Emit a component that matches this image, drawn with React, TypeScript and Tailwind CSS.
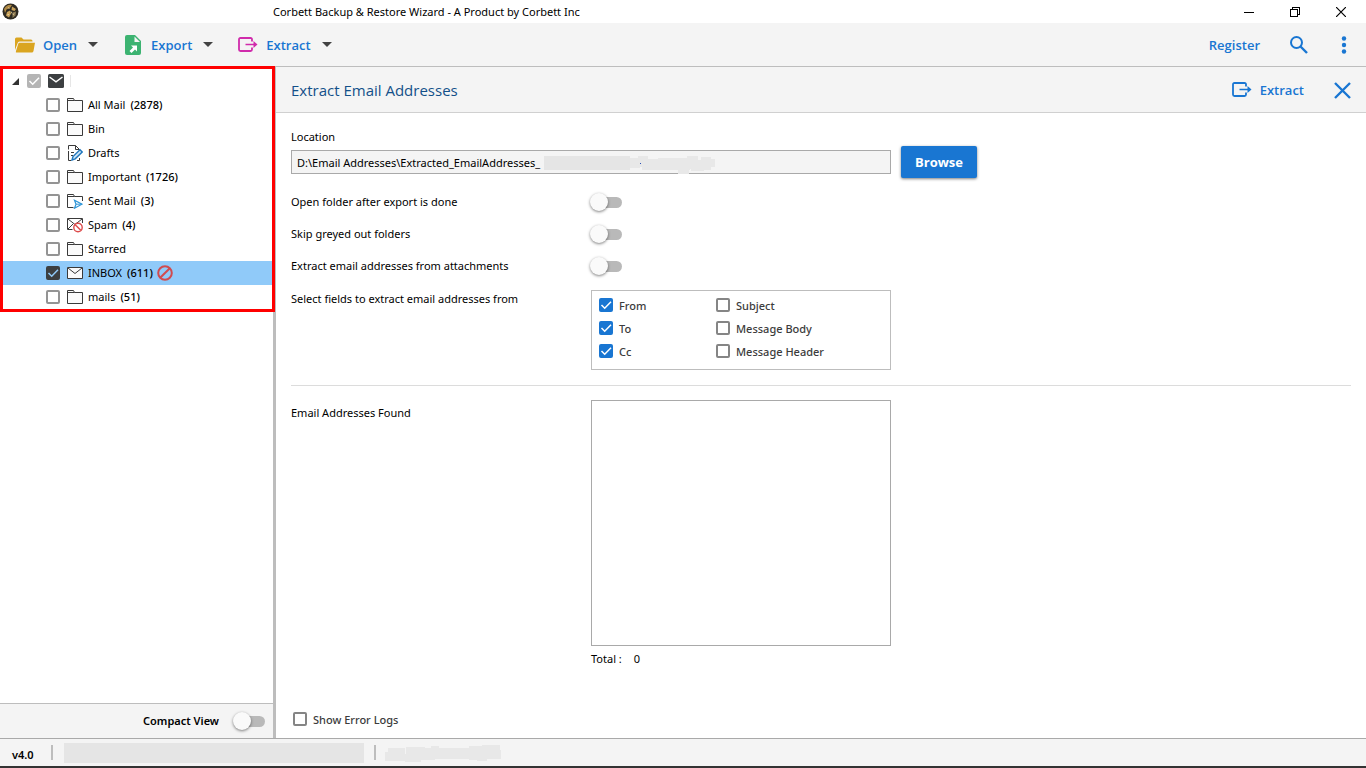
import React, { useState } from 'react';
import clsx from 'clsx';

type IconName = 'folder' | 'drafts' | 'sent' | 'spam' | 'inbox';

const folders: { name: string; count?: number; icon: IconName; selected?: boolean }[] = [
  { name: 'All Mail', count: 2878, icon: 'folder' },
  { name: 'Bin', icon: 'folder' },
  { name: 'Drafts', icon: 'drafts' },
  { name: 'Important', count: 1726, icon: 'folder' },
  { name: 'Sent Mail', count: 3, icon: 'sent' },
  { name: 'Spam', count: 4, icon: 'spam' },
  { name: 'Starred', icon: 'folder' },
  { name: 'INBOX', count: 611, icon: 'inbox', selected: true },
  { name: 'mails', count: 51, icon: 'folder' },
];

const fields = [
  { name: 'From', on: true },
  { name: 'Subject', on: false },
  { name: 'To', on: true },
  { name: 'Message Body', on: false },
  { name: 'Cc', on: true },
  { name: 'Message Header', on: false },
];

export default function App() {
  return (
    <div className="flex min-h-screen flex-col bg-white font-['Noto_Sans','Open_Sans',sans-serif] text-[11px] leading-4 text-black">
      <TitleBar />
      <Toolbar />
      <div className="flex flex-1">
        <Sidebar />
        <ExtractPanel />
      </div>
      <StatusBar />
    </div>
  );
}

function TitleBar() {
  return (
    <header className="flex h-[23px] items-center pr-0.5">
      <div className="w-[273px] shrink-0 pl-0.5">
        <LogoIcon />
      </div>
      <h1 className="flex-1">Corbett Backup &amp; Restore Wizard - A Product by Corbett Inc</h1>
      <button aria-label="Minimize" className="flex h-5 w-[46px] items-center justify-center">
        <svg width="10" height="10" shapeRendering="crispEdges"><path d="M0 5.5h10" stroke="#000" /></svg>
      </button>
      <button aria-label="Restore" className="flex h-5 w-[46px] items-center justify-center">
        <svg width="10" height="10" fill="none" stroke="#000" shapeRendering="crispEdges">
          <path d="M.5 2.5h7v7h-7zM2.5 2V.5h7v7H8" />
        </svg>
      </button>
      <button aria-label="Close" className="flex h-5 w-[46px] items-center justify-center">
        <svg width="10" height="10" stroke="#000" strokeWidth="1.2"><path d="M0 0l10 10M10 0L0 10" /></svg>
      </button>
    </header>
  );
}

function Toolbar() {
  return (
    <nav className="flex h-11 items-center justify-between border-b border-[#bdbdbd] bg-[#f4f4f4] pr-[19px] pl-[15px] font-['Open_Sans',sans-serif] text-[13px] font-semibold text-[#1976d2]">
      <div className="flex items-center gap-[25px]">
        <MenuButton label="Open">
          <svg width="20" height="16" viewBox="0 0 20 16" fill="#daa520">
            <path d="M0 13V2q0-1.500 1.500-1.500H6.500L8.500 2.500H16q1.500 0 1.500 1.500V4.500H4.500Q3 4.500 2.700 6z" />
            <path d="M4.600 5.700H20L18.500 14q-.3 1.500-1.800 1.500H1.200Q.6 15.500 1 14L3.200 7q.3-1.300 1.400-1.300z" />
          </svg>
        </MenuButton>
        <MenuButton label="Export">
          <svg width="20" height="20" viewBox="-2 0 20 20">
            <path d="M2 0h8l6 6v12q0 2-2 2H2q-2 0-2-2V2q0-2 2-2z" fill="#3cb371" />
            <path d="M9.500 1.500V7H15z" fill="#f4f4f4" />
            <path d="M6 10.500h6v6l-2-2-3.500 3.500L4.500 16 8 12.500z" fill="#fff" />
          </svg>
        </MenuButton>
        <MenuButton label="Extract">
          <ExtractIcon className="text-[#d02bab]" />
        </MenuButton>
      </div>
      <div className="flex items-center">
        <a href="#register" className="mr-[30px]">Register</a>
        <button aria-label="Search" className="mr-[33px]">
          <svg width="18" height="18" viewBox="0 0 18 18" fill="none" stroke="currentColor" strokeWidth="2">
            <circle cx="6.500" cy="6.500" r="5.500" />
            <path d="M10.500 10.500l6.500 6.500" strokeWidth="2.400" />
          </svg>
        </button>
        <button aria-label="More">
          <svg width="6" height="18" viewBox="0 0 6 18" fill="currentColor">
            <circle cx="3" cy="2.500" r="2.200" />
            <circle cx="3" cy="9" r="2.200" />
            <circle cx="3" cy="15.500" r="2.200" />
          </svg>
        </button>
      </div>
    </nav>
  );
}

function MenuButton({ label, children }: { label: string; children: React.ReactNode }) {
  return (
    <button className="flex items-center gap-2">
      {children}
      <span>{label}</span>
      <svg width="10" height="5" className="ml-[3px]" fill="#424242"><path d="M0 0h10L5 5z" /></svg>
    </button>
  );
}

function Sidebar() {
  return (
    <aside className="flex w-[276px] shrink-0 flex-col border-r-3 border-[#bdbdbd]">
      <div className="relative pt-0.5 pb-[3px]">
        <div className="flex h-6 items-center pl-3">
          <svg width="7" height="7" className="mr-[8px]" fill="#333"><path d="M7 0v7H0z" /></svg>
          <Checkbox tone="disabled" checked label="Mailbox" />
          <svg width="16" height="14" viewBox="0 0 16 14" className="ml-[7px]">
            <rect width="16" height="14" rx="1.500" fill="#3c3f41" />
            <path d="M1.500 3L8 7.800 14.500 3" fill="none" stroke="#fff" strokeWidth="1.500" />
          </svg>
          <span className="ml-1.5 h-3 w-px bg-[#e6e6e6]" />
        </div>
        <ul>
          {folders.map((f) => (
            <li key={f.name} className={clsx('mr-px ml-[3px]', f.selected && 'bg-[#90caf9]')}>
              <label className="flex h-6 items-center pl-[43px]">
                <Checkbox tone="dark" checked={f.selected} />
                <span className="mr-[5px] ml-[7px]"><FolderIcon name={f.icon} /></span>
                <span>{f.name}</span>
                {f.count !== undefined && <span className="ml-[5px] font-medium">({f.count})</span>}
                {f.selected && (
                  <svg width="16" height="16" viewBox="0 0 16 16" className="ml-1" fill="none" stroke="#d04b4f" strokeWidth="2">
                    <circle cx="8" cy="8" r="6.800" />
                    <path d="M3.200 12.800l9.600-9.600" />
                  </svg>
                )}
              </label>
            </li>
          ))}
        </ul>
        {/* highlight frame around the folder tree, runs over the toolbar line and the splitter */}
        <div className="pointer-events-none absolute -top-px -right-0.5 bottom-0 left-0 border-3 border-[#f00]" />
      </div>
      <label className="mt-auto flex h-[35px] items-center justify-end gap-3.5 border-t border-[#bdbdbd] bg-[#f4f4f4] pr-2 font-semibold">
        Compact View
        <Toggle />
      </label>
    </aside>
  );
}

function ExtractPanel() {
  return (
    <main className="flex min-w-0 flex-1 flex-col">
      <div className="flex h-[46px] items-center border-b border-[#d0d0d0] bg-[#f4f4f4] px-[15px] pt-px font-['Open_Sans',sans-serif]">
        <h2 className="flex-1 text-[15px] leading-5 text-[#135089]">Extract Email Addresses</h2>
        <button className="flex items-center gap-2 text-[13px] font-semibold text-[#1976d2]">
          <ExtractIcon />
          Extract
        </button>
        <button aria-label="Close panel" className="ml-[30px] text-[#1976d2]">
          <svg width="17" height="17" stroke="currentColor" strokeWidth="2.400"><path d="M1 1l15 15M16 1L1 16" /></svg>
        </button>
      </div>

      <div className="flex flex-1 flex-col px-[15px] pt-4 pb-[10px]">
        <label htmlFor="location">Location</label>
        <div className="mt-px flex items-center gap-2.5">
          <div className="relative w-[600px]">
            <input
              id="location"
              readOnly
              value="D:\Email Addresses\Extracted_EmailAddresses_"
              className="block h-6 w-full border border-[#a9a9a9] bg-[#f4f4f4] px-[5px] outline-none"
            />
            <svg width="172" height="20" className="absolute top-[5px] left-[253px]" fill="#e8e8e8" shapeRendering="crispEdges">
              <path d="M0 1h86v14H0z" fill="#e5e5e5" />
              <path d="M86 3h10v10H86zM94 1h10v11H94zM98 4h18v11H98zM114 3h32v12h-32zM134 14h11v5h-11zM143 1h11v13h-11zM147 5h13v11h-13zM157 2h10v13h-10zM165 4h6v8h-6z" />
              <path d="M96 8h1v1h-1z" fill="#2a4fb5" />
            </svg>
          </div>
          <button className="h-8 w-[76px] rounded-xs bg-[#1976d2] font-['Open_Sans',sans-serif] text-[13px] font-bold text-white shadow-[0_1px_3px_rgba(0,0,0,0.5)]">
            Browse
          </button>
        </div>

        <div className="my-2">
          <ToggleRow label="Open folder after export is done" />
          <ToggleRow label="Skip greyed out folders" />
          <ToggleRow label="Extract email addresses from attachments" />
        </div>

        <fieldset className="flex">
          <legend className="float-left w-[300px] leading-[18px]">Select fields to extract email addresses from</legend>
          <div className="grid h-20 w-[300px] grid-cols-[117px_1fr] content-start border border-[#bdbdbd] pt-[3px] pl-[7px]">
            {fields.map((f) => (
              <label key={f.name} className="flex h-[23px] items-center gap-1.5 font-medium text-[#3c3c3c]">
                <Checkbox tone="blue" checked={f.on} />
                {f.name}
              </label>
            ))}
          </div>
        </fieldset>

        <hr className="mt-[15px] mb-[14px] border-[#dcdcdc]" />

        <div className="flex flex-1">
          <label htmlFor="found" className="w-[300px] pt-1 leading-[18px]">Email Addresses Found</label>
          <div className="flex w-[300px] flex-col">
            <textarea id="found" readOnly className="min-h-40 w-full flex-1 resize-none border border-[#a9a9a9] outline-none" />
            <p className="mt-[5px] flex gap-3">
              <span>Total :</span>
              <span>0</span>
            </p>
          </div>
        </div>

        <label className="mt-[45px] flex items-center gap-1.5 self-start pl-0.5 font-medium text-[#3c3c3c]">
          <Checkbox tone="blue" />
          Show Error Logs
        </label>
      </div>
    </main>
  );
}

function StatusBar() {
  return (
    <footer className="flex h-[30px] items-center border-t border-b-2 border-t-[#a9a9a9] border-b-[#333] bg-[#f4f4f4] pl-3">
      <span className="w-[39px] pt-1 font-semibold">v4.0</span>
      <span className="h-[15px] w-0.5 bg-[#bdbdbd]" />
      <span className="ml-[11px] h-5 w-[300px] bg-[#e5e5e5]" />
      <span className="ml-2.5 h-[15px] w-0.5 bg-[#bdbdbd]" />
      <svg width="118" height="18" className="ml-[9px]" fill="#e8e8e8" shapeRendering="crispEdges">
        <path d="M0 8h20v9H0zM3 4h17v10H3zM20 10h16v8H20zM21 3h19v13H21zM36 4h14v12H36zM46 2h8v12h-8zM50 4h38v11H50zM84 2h16v14H84zM92 13h10v4H92zM97 1h18v14H97zM104 6h12v9h-12z" />
      </svg>
    </footer>
  );
}

function ToggleRow({ label }: { label: string }) {
  return (
    <label className="flex h-8 items-center">
      <span className="w-[299px]">{label}</span>
      <Toggle />
    </label>
  );
}

function Toggle() {
  const [on, setOn] = useState(false);

  return (
    <span className="relative flex h-5 w-8 items-center">
      <input
        type="checkbox"
        role="switch"
        checked={on}
        onChange={() => setOn(!on)}
        className="ml-2 h-[11px] w-6 appearance-none rounded-full bg-[#b9b9b9] checked:bg-[#90caf9]"
      />
      <span
        className={clsx(
          'pointer-events-none absolute size-[18px] rounded-full bg-[#fafafa] shadow-[0_1px_3px_rgba(0,0,0,0.5)]',
          on ? 'right-0' : 'left-0'
        )}
      />
    </span>
  );
}

function Checkbox({ tone, checked = false, label }: { tone: 'dark' | 'blue' | 'disabled'; checked?: boolean; label?: string }) {
  const [on, setOn] = useState(checked);

  return (
    <span className={clsx('relative flex shrink-0', tone === 'blue' && 'mb-0.5')}>
      <input
        type="checkbox"
        aria-label={label}
        checked={on}
        disabled={tone === 'disabled'}
        onChange={() => setOn(!on)}
        className={clsx(
          'size-[14px] appearance-none rounded-xs border-2',
          tone === 'dark' && 'border-[#949494] bg-white checked:border-[#3c3f41] checked:bg-[#3c3f41]',
          tone === 'blue' && 'border-[#858585] bg-white checked:border-[#1976d2] checked:bg-[#1976d2]',
          tone === 'disabled' && 'border-[#b5b5b5] bg-[#b5b5b5]'
        )}
      />
      {on && (
        <svg
          width="14"
          height="14"
          className={clsx('pointer-events-none absolute top-0 left-0', tone === 'dark' ? 'text-[#90caf9]' : 'text-white')}
          fill="none"
          stroke="currentColor"
          strokeWidth="1.500"
        >
          <path d="M2.500 7l3.200 3.200L12 3.800" />
        </svg>
      )}
    </span>
  );
}

function FolderIcon({ name }: { name: IconName }) {
  return (
    <svg width="16" height="16" viewBox="0 0 16 16" fill="none" stroke="#3a3a3a">
      {name === 'folder' && <path d="M.5 14.500V1.500H6.500L7.500 3.500H15.500V14.500zM.5 3.500H7.500" fill="#fafafa" />}
      {name === 'sent' && (
        <>
          <path d="M6.500 14.500H.5V1.500H6.500L7.500 3.500H15.500V8M.5 3.500H7.500" />
          <path d="M7.500 7.200L15 11.200 7.500 15.200 9 11.200z" fill="#fff" stroke="#2f96d8" strokeWidth="1.200" />
          <path d="M9 11.200h6" stroke="#2f96d8" />
        </>
      )}
      {name === 'drafts' && (
        <>
          <path d="M1.500 4.500V.5H8.500L12.500 4.500V6M1.500 6v9.500H4M8.500 .5V4.500H12.500M12.500 13v2.500H10M4 7.500h3M4 10.500h2" />
          <path d="M5 15l1-3.500L13 4.800 15.200 7 8.200 13.800z" fill="#cfe6f7" stroke="#2077bd" strokeWidth="1.400" />
        </>
      )}
      {name === 'inbox' && (
        <>
          <path d="M.5 2.500h15v11H.5z" fill="#fafafa" />
          <path d="M1 3L8 8.500 15 3" />
        </>
      )}
      {name === 'spam' && (
        <>
          <path d="M5.500 12.500H.5V1.500H15.500V6M1 2L8 7.500 15 2M1 12l5-5" />
          <circle cx="11" cy="10.500" r="4.200" fill="#fff" stroke="#dd4b4b" strokeWidth="1.400" />
          <path d="M8.200 7.700l5.600 5.600" stroke="#dd4b4b" strokeWidth="1.400" />
        </>
      )}
    </svg>
  );
}

function ExtractIcon({ className }: { className?: string }) {
  return (
    <svg width="20" height="16" viewBox="0 0 20 16" fill="none" stroke="currentColor" strokeWidth="1.800" className={className}>
      <path d="M14 4.500V2.500Q14 1 12.500 1H2.500Q1 1 1 2.500V12.500Q1 14 2.500 14H12.500Q14 14 14 12.500V10.500" />
      <path d="M7.500 7.500H18" strokeWidth="1.500" />
      <path d="M15.500 4L19.500 7.500 15.500 11z" fill="currentColor" stroke="none" />
    </svg>
  );
}

function LogoIcon() {
  return (
    <svg width="17" height="17" viewBox="0 0 17 17">
      <circle cx="8.500" cy="8.500" r="8" fill="#2e2a22" />
      <path d="M2 6Q5 1 10 2L8 5 4.500 6.500 3 10z" fill="#b08a45" />
      <path d="M10 3.500l4 2.500-1.500 2-3-1zM5 9l3-1.500 1 3-2 4-3-2z" fill="#c9a25a" />
      <path d="M10.500 9.500l3.500-1-.5 4-3 2.500z" fill="#8d7a52" />
      <path d="M6 4.500l1.500 1M9 8.500l1 2M12 10.500l-1 1.500M5.500 11.500h1.500" stroke="#e6d5a8" strokeWidth=".8" />
    </svg>
  );
}
